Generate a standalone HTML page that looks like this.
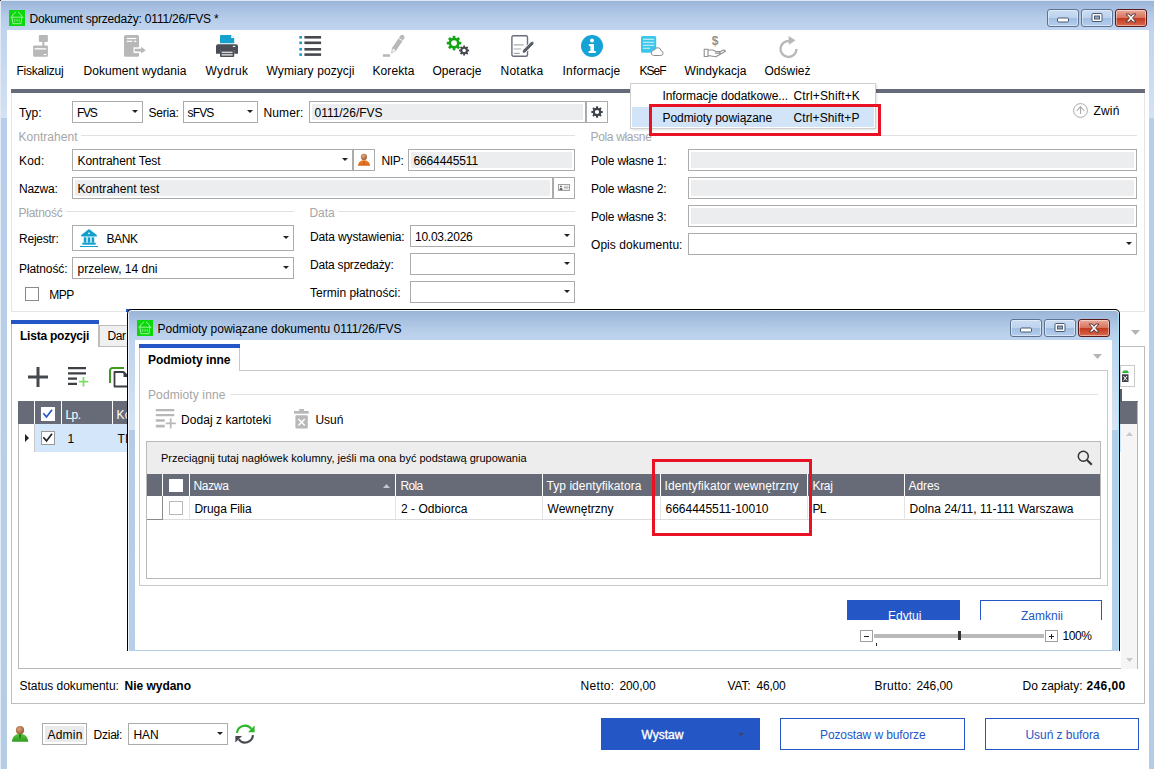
<!DOCTYPE html>
<html lang="pl"><head><meta charset="utf-8"><title>Dokument sprzedaży</title>
<style>
html,body{margin:0;padding:0;}
body{width:1154px;height:769px;overflow:hidden;position:relative;background:#fff;font-family:"Liberation Sans",sans-serif;font-size:12px;}
div,span.t,svg{position:absolute;box-sizing:border-box;}
span.t{white-space:nowrap;}
svg{overflow:visible;}
</style></head>
<body>
<div style="left:0px;top:0px;width:1154px;height:769px;background:linear-gradient(#c0d4ee 0px,#c0d4ee 30px,#d3e2f4 118px,#b6cee9 118px,#b8cfea 450px,#b5cce7 769px);"></div>
<div style="left:0px;top:0px;width:1154px;height:31px;background:linear-gradient(#98b3d6 0px,#a4bddf 6px,#b6cce9 18px,#c0d4ee 30px);"></div>
<div style="left:0px;top:0px;width:1154px;height:1px;background:#dfe8f4;"></div>
<div style="left:0px;top:0px;width:1px;height:769px;background:#e1eaf5;"></div>
<div style="left:0px;top:0px;width:1px;height:1px;background:#333;"></div>
<div style="left:7px;top:30px;width:1142px;height:739px;background:#fff;"></div>
<div style="left:9px;top:10px;width:16px;height:16px;background:#0bd80b;"></div>
<svg style="left:9px;top:10px" width="16" height="16" viewBox="0 0 16 16"><path d="M2.200 7.200h11.700 M3 7.300l1 6.400h8l.9-6.400 M2.600 7.100Q4.300 3.200 6.700 2.100 M13.400 7.100Q11.700 3.200 9.300 2.100" fill="none" stroke="#9af09a" stroke-width="1" stroke-linejoin="round" stroke-linecap="round"/><path d="M5.800 9.200v2.400 M8 9.200v2.400 M10.200 9.200v2.400" stroke="#9af09a" stroke-width=".900"/></svg>
<span id="t0" class="t" style="left:29.5px;top:11.0px;line-height:16px;font-size:12px;color:#000;letter-spacing:-0.202px;">Dokument sprzedaży: 0111/26/FVS *</span>
<div style="left:1047px;top:9px;width:32px;height:18px;background:linear-gradient(#c9dcf3 0%,#bdd3ee 48%,#a2bfe3 52%,#b4cdec 100%);border:1px solid #5d7391;border-radius:3px;box-shadow:inset 0 0 0 1px rgba(255,255,255,.45);"></div>
<svg style="left:1047px;top:9px" width="32" height="18" viewBox="0 0 32 18"><rect x="10.5" y="9.0" width="11" height="4" rx="1" fill="#fff" stroke="#4a5a70" stroke-width="1"/></svg>
<div style="left:1081px;top:9px;width:32px;height:18px;background:linear-gradient(#c9dcf3 0%,#bdd3ee 48%,#a2bfe3 52%,#b4cdec 100%);border:1px solid #5d7391;border-radius:3px;box-shadow:inset 0 0 0 1px rgba(255,255,255,.45);"></div>
<svg style="left:1081px;top:9px" width="32" height="18" viewBox="0 0 32 18"><rect x="11.0" y="4.5" width="10" height="8" rx="1" fill="#fff" stroke="#4a5a70" stroke-width="1"/><rect x="13.5" y="7.0" width="5" height="3" fill="#8fa9cc" stroke="#4a5a70" stroke-width="1"/></svg>
<div style="left:1115px;top:9px;width:32px;height:18px;background:linear-gradient(#e9a99b 0%,#d9735f 48%,#c4391f 52%,#d8694d 100%);border:1px solid #5a1a1a;border-radius:3px;box-shadow:inset 0 0 0 1px rgba(255,255,255,.45);"></div>
<svg style="left:1115px;top:9px" width="32" height="18" viewBox="0 0 32 18"><path d="M11.0 5.0h3.2l1.8 2.3 1.8-2.3h3.2l-3.4 4 3.4 4h-3.2l-1.8-2.3-1.8 2.3h-3.2l3.4-4z" fill="#fff" stroke="#5a3a3a" stroke-width="1" stroke-linejoin="round"/></svg>
<span id="t1" class="t" style="left:16.5px;top:63.0px;line-height:16px;font-size:12px;color:#000;letter-spacing:-0.236px;">Fiskalizuj</span>
<span id="t2" class="t" style="left:83.5px;top:63.0px;line-height:16px;font-size:12px;color:#000;letter-spacing:0.059px;">Dokument wydania</span>
<span id="t3" class="t" style="left:205.5px;top:63.0px;line-height:16px;font-size:12px;color:#000;letter-spacing:0.404px;">Wydruk</span>
<span id="t4" class="t" style="left:266.5px;top:63.0px;line-height:16px;font-size:12px;color:#000;letter-spacing:0.095px;">Wymiary pozycji</span>
<span id="t5" class="t" style="left:372.5px;top:63.0px;line-height:16px;font-size:12px;color:#000;letter-spacing:0.092px;">Korekta</span>
<span id="t6" class="t" style="left:432.5px;top:63.0px;line-height:16px;font-size:12px;color:#000;letter-spacing:0.037px;">Operacje</span>
<span id="t7" class="t" style="left:500.5px;top:63.0px;line-height:16px;font-size:12px;color:#000;letter-spacing:0.234px;">Notatka</span>
<span id="t8" class="t" style="left:562.5px;top:63.0px;line-height:16px;font-size:12px;color:#000;letter-spacing:0.197px;">Informacje</span>
<span id="t9" class="t" style="left:639.5px;top:63.0px;line-height:16px;font-size:12px;color:#000;letter-spacing:-1.004px;">KSeF</span>
<span id="t10" class="t" style="left:684.5px;top:63.0px;line-height:16px;font-size:12px;color:#000;letter-spacing:0.064px;">Windykacja</span>
<span id="t11" class="t" style="left:764.5px;top:63.0px;line-height:16px;font-size:12px;color:#000;letter-spacing:-0.002px;">Odśwież</span>
<svg style="left:30px;top:35px" width="20" height="24" viewBox="0 0 20 24"><rect x="8.800" y="0" width="9.100" height="7" rx="1" fill="#b8b8b8"/><rect x="12.400" y="6.500" width="2" height="4.500" fill="#b8b8b8"/><rect x="3.100" y="10.500" width="14.800" height="11.300" rx="1" fill="#b8b8b8"/><rect x="4.600" y="13.200" width="11.600" height="1.300" fill="#fff"/><rect x="13.700" y="19" width="2.700" height="1.100" fill="#fff"/></svg>
<svg style="left:124px;top:35px" width="24" height="24" viewBox="0 0 24 24"><rect x="0" y="0" width="15" height="21.800" rx="1.500" fill="#b8b8b8"/><rect x="2.800" y="2.900" width="9.500" height="1.200" fill="#fff"/><rect x="2.800" y="5.700" width="5.500" height="1.200" fill="#fff"/><rect x="10" y="5.700" width="2.300" height="1.200" fill="#fff"/><rect x="9.500" y="12.300" width="6" height="5.800" fill="#fff"/><path d="M10.700 13.800h6.500v-2l4.500 3.400-4.500 3.400v-2h-6.500z" fill="#b8b8b8"/></svg>
<svg style="left:216px;top:35px" width="23" height="23" viewBox="0 0 23 23"><path d="M5 0h10.200l3 3V8.200H4V1a1 1 0 0 1 1-1z" fill="#16a1cf"/><path d="M15.200 0v3h3z" fill="#fff"/><path d="M2 9.300h18a2 2 0 0 1 2 2v7.400h-3.800v-3.700H4v3.700H0v-7.400a2 2 0 0 1 2-2z" fill="#4a4d55"/><rect x="16.700" y="10.800" width="2.700" height="1.200" rx=".600" fill="#e8e8e8"/><rect x="4" y="15" width="14.200" height="7" rx="1" fill="#4a4d55"/><rect x="5.600" y="16.600" width="11" height="1.500" fill="#d6d6d6"/><rect x="5.600" y="19.100" width="11" height="1.500" fill="#d6d6d6"/></svg>
<svg style="left:299px;top:36px" width="24" height="21" viewBox="0 0 24 21"><g fill="#16a1cf"><rect x=".300" y="0" width="2.700" height="2.600"/><rect x=".300" y="5.5" width="2.700" height="2.600"/><rect x=".300" y="12" width="2.700" height="2.600"/><rect x=".300" y="17.3" width="2.700" height="2.600"/></g><g fill="#45484f"><rect x="5.400" y="0" width="16.700" height="2.600"/><rect x="5.400" y="5.5" width="16.700" height="2.600"/><rect x="5.400" y="12" width="16.700" height="2.600"/><rect x="5.400" y="17.3" width="16.700" height="2.600"/></g></svg>
<svg style="left:382px;top:35px" width="24" height="24" viewBox="0 0 24 24"><rect x=".900" y="19.200" width="7.100" height="2.600" fill="#b8b8b8"/><path d="M9.200 18.600 10 13.100 18.300 .700a2.400 2.400 0 0 1 4 2.600L14 15.800z" fill="#b8b8b8"/><path d="M10.300 17.200l.6-3.600 2.500 1.700z" fill="#fff"/><path d="M16.600 3.200l4 2.700" stroke="#fff" stroke-width=".900"/></svg>
<svg style="left:445px;top:35px" width="26" height="26" viewBox="0 0 26 26"><rect x="7.73" y="0.84" width="2.64" height="3.30" fill="#12a612" transform="rotate(0 9.05 8.1)"/><rect x="7.73" y="0.84" width="2.64" height="3.30" fill="#12a612" transform="rotate(45 9.05 8.1)"/><rect x="7.73" y="0.84" width="2.64" height="3.30" fill="#12a612" transform="rotate(90 9.05 8.1)"/><rect x="7.73" y="0.84" width="2.64" height="3.30" fill="#12a612" transform="rotate(135 9.05 8.1)"/><rect x="7.73" y="0.84" width="2.64" height="3.30" fill="#12a612" transform="rotate(180 9.05 8.1)"/><rect x="7.73" y="0.84" width="2.64" height="3.30" fill="#12a612" transform="rotate(225 9.05 8.1)"/><rect x="7.73" y="0.84" width="2.64" height="3.30" fill="#12a612" transform="rotate(270 9.05 8.1)"/><rect x="7.73" y="0.84" width="2.64" height="3.30" fill="#12a612" transform="rotate(315 9.05 8.1)"/><circle cx="9.05" cy="8.1" r="5.5" fill="#12a612"/><circle cx="9.05" cy="8.1" r="2.9" fill="#fff"/><rect x="18.19" y="10.48" width="1.82" height="2.28" fill="#45484f" transform="rotate(0 19.1 15.5)"/><rect x="18.19" y="10.48" width="1.82" height="2.28" fill="#45484f" transform="rotate(45 19.1 15.5)"/><rect x="18.19" y="10.48" width="1.82" height="2.28" fill="#45484f" transform="rotate(90 19.1 15.5)"/><rect x="18.19" y="10.48" width="1.82" height="2.28" fill="#45484f" transform="rotate(135 19.1 15.5)"/><rect x="18.19" y="10.48" width="1.82" height="2.28" fill="#45484f" transform="rotate(180 19.1 15.5)"/><rect x="18.19" y="10.48" width="1.82" height="2.28" fill="#45484f" transform="rotate(225 19.1 15.5)"/><rect x="18.19" y="10.48" width="1.82" height="2.28" fill="#45484f" transform="rotate(270 19.1 15.5)"/><rect x="18.19" y="10.48" width="1.82" height="2.28" fill="#45484f" transform="rotate(315 19.1 15.5)"/><circle cx="19.1" cy="15.5" r="3.8" fill="#45484f"/><circle cx="19.1" cy="15.5" r="1.8" fill="#fff"/></svg>
<svg style="left:511px;top:35px" width="24" height="24" viewBox="0 0 24 24"><rect x=".900" y=".800" width="15.600" height="20.400" rx="1.500" fill="#fff" stroke="#6a6e7a" stroke-width="1.400"/><path d="M2.800 9.800h9.900 M2.800 14h7.500 M2.800 18.400h6" stroke="#a9abb1" stroke-width="1.200"/><path d="M10.300 19.300l1.300-4.200 8.200-8.300a1.900 1.900 0 0 1 2.800 2.600l-8.200 8.400z" fill="#5d616b" stroke="#fff" stroke-width="1"/><path d="M10.300 19.300l.9-2.800 1.900 1.900z" fill="#fff"/></svg>
<svg style="left:581px;top:35px" width="22" height="22" viewBox="0 0 22 22"><circle cx="11" cy="11" r="11" fill="#14a3d4"/><circle cx="11" cy="5.600" r="2" fill="#fff"/><path d="M7.800 9h5.200v7h1.800v2H7.600v-2h1.800v-5H7.800z" fill="#fff"/></svg>
<svg style="left:641px;top:36px" width="24" height="22" viewBox="0 0 24 22"><path d="M0 1.500A1.500 1.500 0 0 1 1.500 0h12.200A1.500 1.500 0 0 1 15.200 1.500V16.700H1.500A1.500 1.500 0 0 1 0 15.200z" fill="#3cc6e8"/><path d="M2 3.300h11.200 M2 6.300h11.200 M2 9.300h11.200 M2 12.300h7" stroke="#d9f4fb" stroke-width="1.100"/><path d="M12.500 19.500h7.200a2.400 2.400 0 0 0 .4-4.750 3.400 3.400 0 0 0-6.600-.75A2.800 2.800 0 0 0 12.500 19.500z" fill="#fff" stroke="#8a8d92" stroke-width="1"/></svg>
<svg style="left:703px;top:35px" width="24" height="24" viewBox="0 0 24 24"><text x="12.200" y="10.300" font-size="12" font-weight="700" font-family='"Liberation Sans",sans-serif' text-anchor="middle" fill="#8f8f8f">$</text><path d="M1.200 14.200h3.800v7.300H1.200z M5 15h4.800l3.200 1.500h4.200v1.600H12 M5 20.500l7.800 1.300 9.700-5.600c-.8-1.200-2-1.200-3-.7l-3.300 1.800" fill="none" stroke="#8f8f8f" stroke-width="1.100" stroke-linejoin="round"/></svg>
<svg style="left:777px;top:35px" width="22" height="24" viewBox="0 0 22 24"><path d="M13.500 6.200A8 8 0 1 0 19.500 14" fill="none" stroke="#b8b8b8" stroke-width="2.400"/><path d="M11.500 1l7 4.200-6.500 4.600z" fill="#b8b8b8"/></svg>
<div style="left:11px;top:89px;width:1134px;height:4px;background:#676b77;"></div>
<div style="left:11px;top:93px;width:1134px;height:219px;border:1px solid #e5e5e5;border-top:none;background:#fff;"></div>
<div style="left:11px;top:324px;width:1px;height:22px;background:#bdbdbd;"></div>
<div style="left:11px;top:346px;width:1134px;height:358px;border:1px solid #bdbdbd;background:#fff;"></div>
<span id="t12" class="t" style="left:19.0px;top:105.0px;line-height:16px;font-size:12px;color:#000;letter-spacing:-0.047px;">Typ:</span>
<div style="left:72px;top:101px;width:71px;height:22px;border:1px solid #ababab;background:#fff;"></div>
<svg style="left:132px;top:110.0px" width="6" height="3" viewBox="0 0 6 3"><path d="M0 0h6L3 3z" fill="#222"/></svg>
<span id="t13" class="t" style="left:77.0px;top:105.0px;line-height:16px;font-size:12px;color:#000;letter-spacing:-1.281px;">FVS</span>
<span id="t14" class="t" style="left:148.5px;top:105.0px;line-height:16px;font-size:12px;color:#000;letter-spacing:-0.227px;">Seria:</span>
<div style="left:183px;top:101px;width:75px;height:22px;border:1px solid #ababab;background:#fff;"></div>
<svg style="left:247px;top:110.0px" width="6" height="3" viewBox="0 0 6 3"><path d="M0 0h6L3 3z" fill="#222"/></svg>
<span id="t15" class="t" style="left:187.5px;top:105.0px;line-height:16px;font-size:12px;color:#000;letter-spacing:-0.836px;">sFVS</span>
<span id="t16" class="t" style="left:263.5px;top:105.0px;line-height:16px;font-size:12px;color:#000;letter-spacing:0.109px;">Numer:</span>
<div style="left:309px;top:101px;width:277px;height:22px;border:1px solid #ababab;background:#fff;"></div>
<div style="left:312px;top:104px;width:271px;height:16px;background:#ecedee;"></div>
<span id="t17" class="t" style="left:314.5px;top:105.0px;line-height:16px;font-size:12px;color:#000;letter-spacing:-0.025px;">0111/26/FVS</span>
<div style="left:586px;top:101px;width:22px;height:22px;border:1px solid #ababab;background:#fff;"></div>
<svg style="left:591px;top:106px" width="12" height="12" viewBox="0 0 12 12"><rect x="4.97" y="0.32" width="2.06" height="2.58" fill="#3f434a" transform="rotate(0 6 6)"/><rect x="4.97" y="0.32" width="2.06" height="2.58" fill="#3f434a" transform="rotate(45 6 6)"/><rect x="4.97" y="0.32" width="2.06" height="2.58" fill="#3f434a" transform="rotate(90 6 6)"/><rect x="4.97" y="0.32" width="2.06" height="2.58" fill="#3f434a" transform="rotate(135 6 6)"/><rect x="4.97" y="0.32" width="2.06" height="2.58" fill="#3f434a" transform="rotate(180 6 6)"/><rect x="4.97" y="0.32" width="2.06" height="2.58" fill="#3f434a" transform="rotate(225 6 6)"/><rect x="4.97" y="0.32" width="2.06" height="2.58" fill="#3f434a" transform="rotate(270 6 6)"/><rect x="4.97" y="0.32" width="2.06" height="2.58" fill="#3f434a" transform="rotate(315 6 6)"/><circle cx="6" cy="6" r="4.3" fill="#3f434a"/><circle cx="6" cy="6" r="2.1" fill="#fff"/></svg>
<svg style="left:1073px;top:102.5px" width="15" height="15" viewBox="0 0 15 15"><circle cx="7.500" cy="7.500" r="6.900" fill="none" stroke="#ababab" stroke-width="1"/><path d="M7.500 11V3.800 M3.700 8 7.500 3.700l3.800 4.300" fill="none" stroke="#ababab" stroke-width="1.100"/></svg>
<span id="t18" class="t" style="left:1093.5px;top:103.0px;line-height:16px;font-size:12px;color:#000;letter-spacing:0.164px;">Zwiń</span>
<span id="t19" class="t" style="left:18.5px;top:129.0px;line-height:16px;font-size:12px;color:#a6a6a6;letter-spacing:0.028px;">Kontrahent</span>
<div style="left:81px;top:135px;width:494px;height:1px;background:#e1e1e1;"></div>
<span id="t20" class="t" style="left:590.5px;top:129.0px;line-height:16px;font-size:12px;color:#a6a6a6;letter-spacing:-0.338px;">Pola własne</span>
<div style="left:655px;top:135px;width:482px;height:1px;background:#e1e1e1;"></div>
<span id="t21" class="t" style="left:19.0px;top:153.0px;line-height:16px;font-size:12px;color:#000;letter-spacing:0.203px;">Kod:</span>
<div style="left:72px;top:149px;width:281px;height:22px;border:1px solid #ababab;background:#fff;"></div>
<svg style="left:342px;top:158.0px" width="6" height="3" viewBox="0 0 6 3"><path d="M0 0h6L3 3z" fill="#222"/></svg>
<span id="t22" class="t" style="left:77.5px;top:153.0px;line-height:16px;font-size:12px;color:#000;letter-spacing:-0.056px;">Kontrahent Test</span>
<div style="left:353px;top:149px;width:22px;height:22px;border:1px solid #ababab;background:#fff;"></div>
<svg style="left:358px;top:153px" width="13" height="13" viewBox="0 0 13 13"><defs><radialGradient id="hd2" cx=".4" cy=".35" r=".7"><stop offset="0" stop-color="#dcae8c"/><stop offset="1" stop-color="#a5562a"/></radialGradient><linearGradient id="bd2" x1="0" y1="0" x2="0" y2="1"><stop offset="0" stop-color="#ef8a2a"/><stop offset="1" stop-color="#d6641a"/></linearGradient></defs><path d="M0 12.800c.2-3.800 2.500-5.600 6-5.600s5.800 1.800 6 5.600z" fill="url(#bd2)"/><path d="M6 7.400l-.9 1 .9 3.200.9-3.200z" fill="#b9541a"/><circle cx="5.900" cy="3.900" r="3.100" fill="url(#hd2)"/></svg>
<span id="t23" class="t" style="left:381.5px;top:153.0px;line-height:16px;font-size:12px;color:#000;letter-spacing:-0.336px;">NIP:</span>
<div style="left:408px;top:149px;width:167px;height:22px;border:1px solid #ababab;background:#fff;"></div>
<div style="left:411px;top:152px;width:161px;height:16px;background:#ecedee;"></div>
<span id="t24" class="t" style="left:413.5px;top:153.0px;line-height:16px;font-size:12px;color:#000;letter-spacing:-0.136px;">6664445511</span>
<span id="t25" class="t" style="left:19.0px;top:181.0px;line-height:16px;font-size:12px;color:#000;letter-spacing:-0.253px;">Nazwa:</span>
<div style="left:72px;top:177px;width:481px;height:22px;border:1px solid #ababab;background:#fff;"></div>
<div style="left:75px;top:180px;width:475px;height:16px;background:#ecedee;"></div>
<span id="t26" class="t" style="left:77.5px;top:181.0px;line-height:16px;font-size:12px;color:#000;letter-spacing:0.040px;">Kontrahent test</span>
<div style="left:553px;top:177px;width:22px;height:22px;border:1px solid #ababab;background:#fff;"></div>
<svg style="left:558px;top:184px" width="12" height="7" viewBox="0 0 12 7"><rect x=".500" y=".500" width="11" height="6" fill="#fff" stroke="#a0a0a0" stroke-width="1"/><circle cx="3" cy="2.400" r=".900" fill="#555"/><path d="M1.300 6c.2-1.600.9-2.300 1.700-2.300s1.500.7 1.700 2.300z" fill="#666"/><rect x="5.800" y="1.500" width="4.700" height="4" fill="#d4d4d4"/><path d="M5.800 3.500h4.700" stroke="#a8a8a8" stroke-width=".700"/></svg>
<span id="t27" class="t" style="left:18.5px;top:205.0px;line-height:16px;font-size:12px;color:#a6a6a6;letter-spacing:-0.254px;">Płatność</span>
<div style="left:66px;top:211px;width:228px;height:1px;background:#e1e1e1;"></div>
<span id="t28" class="t" style="left:309.5px;top:205.0px;line-height:16px;font-size:12px;color:#a6a6a6;letter-spacing:-0.090px;">Data</span>
<div style="left:338px;top:211px;width:237px;height:1px;background:#e1e1e1;"></div>
<span id="t29" class="t" style="left:19.0px;top:231.0px;line-height:16px;font-size:12px;color:#000;letter-spacing:-0.232px;">Rejestr:</span>
<div style="left:72px;top:225px;width:222px;height:26px;border:1px solid #ababab;background:#fff;"></div>
<svg style="left:283px;top:236.0px" width="6" height="3" viewBox="0 0 6 3"><path d="M0 0h6L3 3z" fill="#222"/></svg>
<svg style="left:80px;top:229px" width="18" height="18" viewBox="0 0 18 18"><path d="M9 .100 16.800 6V7.400H1.200V6z" fill="#11a0cc"/><circle cx="9" cy="4.300" r=".900" fill="#fff"/><rect x="3.800" y="8.300" width="2.600" height="5.400" fill="#11a0cc"/><rect x="7.700" y="8.300" width="2.600" height="5.400" fill="#11a0cc"/><rect x="11.600" y="8.300" width="2.600" height="5.400" fill="#11a0cc"/><rect x="2.300" y="13.700" width="13.400" height="2" fill="#11a0cc"/><rect x="0" y="17" width="18" height="1" fill="#11a0cc"/></svg>
<span id="t30" class="t" style="left:106.5px;top:231.0px;line-height:16px;font-size:12px;color:#000;letter-spacing:-0.422px;">BANK</span>
<span id="t31" class="t" style="left:19.0px;top:261.0px;line-height:16px;font-size:12px;color:#000;letter-spacing:-0.097px;">Płatność:</span>
<div style="left:72px;top:257px;width:222px;height:22px;border:1px solid #ababab;background:#fff;"></div>
<svg style="left:283px;top:266.0px" width="6" height="3" viewBox="0 0 6 3"><path d="M0 0h6L3 3z" fill="#222"/></svg>
<span id="t32" class="t" style="left:77.5px;top:261.0px;line-height:16px;font-size:12px;color:#000;letter-spacing:-0.004px;">przelew, 14 dni</span>
<div style="left:25px;top:287px;width:14px;height:14px;border:1px solid #8a8a8a;background:#fff;"></div>
<span id="t33" class="t" style="left:49.2px;top:287.0px;line-height:16px;font-size:12px;color:#000;letter-spacing:-0.470px;">MPP</span>
<span id="t34" class="t" style="left:310.0px;top:229.0px;line-height:16px;font-size:12px;color:#000;letter-spacing:-0.130px;">Data wystawienia:</span>
<div style="left:410px;top:225px;width:165px;height:22px;border:1px solid #ababab;background:#fff;"></div>
<svg style="left:564px;top:234.0px" width="6" height="3" viewBox="0 0 6 3"><path d="M0 0h6L3 3z" fill="#222"/></svg>
<span id="t35" class="t" style="left:415.0px;top:229.0px;line-height:16px;font-size:12px;color:#000;letter-spacing:-0.256px;">10.03.2026</span>
<span id="t36" class="t" style="left:310.0px;top:257.0px;line-height:16px;font-size:12px;color:#000;letter-spacing:-0.214px;">Data sprzedaży:</span>
<div style="left:410px;top:253px;width:165px;height:22px;border:1px solid #ababab;background:#fff;"></div>
<svg style="left:564px;top:262.0px" width="6" height="3" viewBox="0 0 6 3"><path d="M0 0h6L3 3z" fill="#222"/></svg>
<span id="t37" class="t" style="left:310.0px;top:285.0px;line-height:16px;font-size:12px;color:#000;letter-spacing:0.027px;">Termin płatności:</span>
<div style="left:410px;top:281px;width:165px;height:22px;border:1px solid #ababab;background:#fff;"></div>
<svg style="left:564px;top:290.0px" width="6" height="3" viewBox="0 0 6 3"><path d="M0 0h6L3 3z" fill="#222"/></svg>
<span id="t38" class="t" style="left:591.0px;top:153.0px;line-height:16px;font-size:12px;color:#000;letter-spacing:-0.182px;">Pole własne 1:</span>
<div style="left:688px;top:149px;width:449px;height:22px;border:1px solid #ababab;background:#fff;"></div>
<div style="left:691px;top:152px;width:443px;height:16px;background:#ecedee;"></div>
<span id="t39" class="t" style="left:591.0px;top:181.0px;line-height:16px;font-size:12px;color:#000;letter-spacing:-0.182px;">Pole własne 2:</span>
<div style="left:688px;top:177px;width:449px;height:22px;border:1px solid #ababab;background:#fff;"></div>
<div style="left:691px;top:180px;width:443px;height:16px;background:#ecedee;"></div>
<span id="t40" class="t" style="left:591.0px;top:209.0px;line-height:16px;font-size:12px;color:#000;letter-spacing:-0.182px;">Pole własne 3:</span>
<div style="left:688px;top:205px;width:449px;height:22px;border:1px solid #ababab;background:#fff;"></div>
<div style="left:691px;top:208px;width:443px;height:16px;background:#ecedee;"></div>
<span id="t41" class="t" style="left:591.0px;top:237.0px;line-height:16px;font-size:12px;color:#000;letter-spacing:0.052px;">Opis dokumentu:</span>
<div style="left:688px;top:233px;width:449px;height:22px;border:1px solid #ababab;background:#fff;"></div>
<svg style="left:1126px;top:242.0px" width="6" height="3" viewBox="0 0 6 3"><path d="M0 0h6L3 3z" fill="#222"/></svg>
<div style="left:630px;top:83px;width:246px;height:46px;background:#fff;border:1px solid #cfcfcf;box-shadow:1px 1px 2px rgba(0,0,0,.12);"></div>
<div style="left:632px;top:107px;width:242px;height:20px;background:#d2e4f8;"></div>
<span id="t42" class="t" style="left:662.5px;top:88.0px;line-height:16px;font-size:12px;color:#000;letter-spacing:-0.083px;">Informacje dodatkowe...</span>
<span id="t43" class="t" style="left:793.5px;top:88.0px;line-height:16px;font-size:12px;color:#000;letter-spacing:0.150px;">Ctrl+Shift+K</span>
<span id="t44" class="t" style="left:662.5px;top:110.0px;line-height:16px;font-size:12px;color:#000;letter-spacing:-0.069px;">Podmioty powiązane</span>
<span id="t45" class="t" style="left:793.5px;top:110.0px;line-height:16px;font-size:12px;color:#000;letter-spacing:0.108px;">Ctrl+Shift+P</span>
<div style="left:649px;top:104px;width:232px;height:32px;border:3px solid #e81224;"></div>
<div style="left:99px;top:325px;width:41px;height:22px;background:#f0f0f0;border:1px solid #bdbdbd;"></div>
<span id="t46" class="t" style="left:107.5px;top:328.0px;line-height:16px;font-size:12px;color:#000;letter-spacing:-0.448px;">Dar</span>
<div style="left:12px;top:320px;width:87px;height:27px;background:#fff;border-right:1px solid #bdbdbd;"></div>
<div style="left:11px;top:320px;width:88px;height:4px;background:#2457c5;"></div>
<span id="t47" class="t" style="left:20.0px;top:328.0px;line-height:16px;font-size:12px;color:#000;font-weight:700;letter-spacing:-0.233px;">Lista pozycji</span>
<svg style="left:1131px;top:330px" width="9" height="5" viewBox="0 0 9 5"><path d="M0 0h9L4.500 5z" fill="#b4b4b4"/></svg>
<div style="left:18px;top:402px;width:1120px;height:267px;border:1px solid #b8b8b8;border-top:none;background:#fff;"></div>
<svg style="left:28px;top:367px" width="20" height="20" viewBox="0 0 20 20"><path d="M10 0v20 M0 10h20" stroke="#45484f" stroke-width="3"/></svg>
<svg style="left:68px;top:367px" width="21" height="20" viewBox="0 0 21 20"><path d="M0 1.200h18 M0 6.400h18 M0 11.600h9 M0 16.800h9" stroke="#3b3f46" stroke-width="2.200"/><path d="M15.500 10v9.500 M11 14.700h9.300" stroke="#7ddc6a" stroke-width="1.800"/></svg>
<svg style="left:109px;top:367px" width="20" height="20" viewBox="0 0 20 20"><path d="M1 16V3.500A2.500 2.500 0 0 1 3.500 1H15" fill="none" stroke="#3e9b1f" stroke-width="2"/><path d="M5.500 5h9l5 5v9.500h-14z" fill="#fff" stroke="#3b3f46" stroke-width="1.800" stroke-linejoin="round"/><path d="M14.500 5v5h5z" fill="#3b3f46"/></svg>
<div style="left:1120px;top:365px;width:15px;height:22px;border:1px solid #c9c9c9;background:#fff;"></div>
<svg style="left:1122px;top:370px" width="8" height="12" viewBox="0 0 8 12"><path d="M0 3 1.500 .500h4L7 3z" fill="#2db52d"/><rect x="0" y="4.300" width="6.500" height="7.700" fill="#3b3f46"/><path d="M1.500 6l3.500 4.500 M5 6 1.500 10.500" stroke="#fff" stroke-width="1"/></svg>
<div style="left:18px;top:401px;width:1120px;height:23px;background:#676b77;"></div>
<div style="left:34px;top:401px;width:1px;height:23px;background:#fff;"></div>
<div style="left:61px;top:401px;width:1px;height:23px;background:#fff;"></div>
<div style="left:112px;top:401px;width:1px;height:23px;background:#fff;"></div>
<div style="left:41px;top:407px;width:14px;height:14px;background:#fff;border:1px solid #fff;"></div>
<svg style="left:41px;top:407px" width="14" height="14" viewBox="0 0 14 14"><path d="M2.300 6.200l3.200 3.700 5.500-7.200" fill="none" stroke="#2457c5" stroke-width="1.700"/></svg>
<span id="t48" class="t" style="left:65.5px;top:407.0px;line-height:16px;font-size:12px;color:#fff;letter-spacing:-0.562px;">Lp.</span>
<span id="t49" class="t" style="left:116.5px;top:407.0px;line-height:16px;font-size:12px;color:#fff;letter-spacing:0.156px;">Ko</span>
<div style="left:35px;top:424px;width:1103px;height:28px;background:#d4e6f9;"></div>
<div style="left:34px;top:424px;width:1px;height:28px;background:#c9c9c9;"></div>
<svg style="left:25px;top:434px" width="4" height="8" viewBox="0 0 4 8"><path d="M0 0l4 4-4 4z" fill="#222"/></svg>
<div style="left:41px;top:431px;width:14px;height:14px;background:#fff;border:1px solid #9a9a9a;"></div>
<svg style="left:41px;top:431px" width="14" height="14" viewBox="0 0 14 14"><path d="M2.300 6.200l3.200 3.700 5.500-7.200" fill="none" stroke="#222" stroke-width="1.700"/></svg>
<span id="t50" class="t" style="left:67.5px;top:431.0px;line-height:16px;font-size:12px;color:#000;letter-spacing:-0.688px;">1</span>
<span id="t51" class="t" style="left:117.5px;top:431.0px;line-height:16px;font-size:12px;color:#000;letter-spacing:0.164px;">TI</span>
<div style="left:1120px;top:389px;width:2px;height:13px;background:#555b68;"></div>
<div style="left:1121px;top:424px;width:16px;height:245px;background:#f5f5f5;"></div>
<svg style="left:1126px;top:432px" width="7" height="4" viewBox="0 0 7 4"><path d="M0 4h7L3.500 0z" fill="#c8c8c8"/></svg>
<svg style="left:1126px;top:658px" width="7" height="4" viewBox="0 0 7 4"><path d="M0 0h7L3.500 4z" fill="#c8c8c8"/></svg>
<div style="left:1137px;top:402px;width:1px;height:267px;background:#b8b8b8;"></div>
<span id="t52" class="t" style="left:19.5px;top:678.0px;line-height:16px;font-size:12px;color:#000;letter-spacing:-0.045px;">Status dokumentu:</span>
<span id="t53" class="t" style="left:124.5px;top:678.0px;line-height:16px;font-size:12px;color:#000;font-weight:700;letter-spacing:-0.019px;">Nie wydano</span>
<span id="t54" class="t" style="left:580.5px;top:678.0px;line-height:16px;font-size:12px;color:#000;letter-spacing:0.328px;">Netto:</span>
<span id="t55" class="t" style="left:619.5px;top:678.0px;line-height:16px;font-size:12px;color:#000;letter-spacing:-0.120px;">200,00</span>
<span id="t56" class="t" style="left:727.5px;top:678.0px;line-height:16px;font-size:12px;color:#000;letter-spacing:-0.141px;">VAT:</span>
<span id="t57" class="t" style="left:756.5px;top:678.0px;line-height:16px;font-size:12px;color:#000;letter-spacing:-0.206px;">46,00</span>
<span id="t58" class="t" style="left:874.5px;top:678.0px;line-height:16px;font-size:12px;color:#000;letter-spacing:0.234px;">Brutto:</span>
<span id="t59" class="t" style="left:916.5px;top:678.0px;line-height:16px;font-size:12px;color:#000;letter-spacing:-0.120px;">246,00</span>
<span id="t60" class="t" style="left:1022.5px;top:678.0px;line-height:16px;font-size:12px;color:#000;letter-spacing:-0.003px;">Do zapłaty:</span>
<span id="t61" class="t" style="left:1086.5px;top:678.0px;line-height:16px;font-size:12px;color:#000;font-weight:700;letter-spacing:0.380px;">246,00</span>
<svg style="left:12px;top:726px" width="17" height="16" viewBox="0 0 17 16"><defs><radialGradient id="hd" cx=".4" cy=".35" r=".7"><stop offset="0" stop-color="#d9a27e"/><stop offset="1" stop-color="#96552f"/></radialGradient><linearGradient id="bd" x1="0" y1="0" x2="0" y2="1"><stop offset="0" stop-color="#5cc83c"/><stop offset="1" stop-color="#2f9a22"/></linearGradient></defs><path d="M0 15.800c.2-5 3.300-8.100 8.100-8.100s7.900 3.100 8.100 8.100z" fill="url(#bd)"/><path d="M8.100 8l-1.100 1.300 1.100 4.200 1.100-4.200z" fill="#1f6e18"/><circle cx="8" cy="4.200" r="4.100" fill="url(#hd)"/></svg>
<div style="left:42px;top:723px;width:45px;height:22px;border:1px solid #ababab;background:#fff;"></div>
<div style="left:45px;top:726px;width:39px;height:16px;background:#eaeaea;"></div>
<span id="t62" class="t" style="left:47.5px;top:727.0px;line-height:16px;font-size:12px;color:#000;letter-spacing:0.197px;">Admin</span>
<span id="t63" class="t" style="left:93.5px;top:727.0px;line-height:16px;font-size:12px;color:#000;letter-spacing:-0.235px;">Dział:</span>
<div style="left:128px;top:723px;width:100px;height:22px;border:1px solid #ababab;background:#fff;"></div>
<svg style="left:217px;top:732.0px" width="6" height="3" viewBox="0 0 6 3"><path d="M0 0h6L3 3z" fill="#222"/></svg>
<span id="t64" class="t" style="left:133.5px;top:727.0px;line-height:16px;font-size:12px;color:#000;letter-spacing:-0.115px;">HAN</span>
<svg style="left:234px;top:723px" width="22" height="22" viewBox="0 0 22 22"><path d="M3 10A8 8 0 0 1 17.300 5.800" fill="none" stroke="#2db52d" stroke-width="2.100"/><path d="M20.600 2.600v6.600h-6.600z" fill="#2db52d"/><path d="M19 12.200A8 8 0 0 1 4.700 16.400" fill="none" stroke="#45484f" stroke-width="2.100"/><path d="M1.400 19.600v-6.600h6.600z" fill="#45484f"/></svg>
<div style="left:601px;top:718px;width:159px;height:32px;background:#2457c5;"></div>
<span id="t65" class="t" style="left:641.5px;top:727.0px;line-height:16px;font-size:12px;color:#fff;letter-spacing:0.016px;-webkit-text-stroke:.35px #fff;">Wystaw</span>
<svg style="left:738px;top:733px" width="6" height="3" viewBox="0 0 6 3"><path d="M0 0h6L3 3z" fill="#3b4560"/></svg>
<div style="left:780px;top:718px;width:185px;height:32px;border:1px solid #2457c5;background:#fff;"></div>
<span id="t66" class="t" style="left:820.0px;top:727.0px;line-height:16px;font-size:12px;color:#2457c5;letter-spacing:-0.105px;">Pozostaw w buforze</span>
<div style="left:985px;top:718px;width:154px;height:32px;border:1px solid #2457c5;background:#fff;"></div>
<span id="t67" class="t" style="left:1025.5px;top:727.0px;line-height:16px;font-size:12px;color:#2457c5;letter-spacing:-0.055px;">Usuń z bufora</span>
<div style="left:126px;top:309px;width:5px;height:3px;background:#2457c5;"></div>
<div style="left:127px;top:309px;width:993px;height:342px;background:#000;border-radius:5px 5px 0 0;"></div>
<div style="left:128px;top:310px;width:991px;height:341px;background:#eef4fb;border-radius:4px 4px 0 0;"></div>
<div style="left:1118px;top:314px;width:1px;height:337px;background:#a5e3f7;"></div>
<div style="left:129px;top:311px;width:989px;height:340px;background:linear-gradient(#bfd4ee 0px,#bfd4ee 30px,#d6e4f5 119px,#b3cce8 119px,#b6cfea 340px);border-radius:3px 3px 0 0;"></div>
<div style="left:129px;top:311px;width:989px;height:30px;background:linear-gradient(#9ab5d7 0px,#a5bfdf 8px,#b7ceea 20px,#bfd4ee 30px);border-radius:3px 3px 0 0;"></div>
<div style="left:128px;top:650px;width:991px;height:1px;background:#fff;"></div>
<div style="left:129px;top:650px;width:989px;height:1px;background:#b5cfe9;"></div>
<div style="left:135px;top:340px;width:977px;height:310px;background:#fff;"></div>
<div style="left:137px;top:320px;width:16px;height:16px;background:#0bd80b;"></div>
<svg style="left:137px;top:320px" width="16" height="16" viewBox="0 0 16 16"><path d="M2.200 7.200h11.700 M3 7.300l1 6.400h8l.9-6.400 M2.600 7.100Q4.300 3.200 6.700 2.100 M13.400 7.100Q11.700 3.200 9.300 2.100" fill="none" stroke="#9af09a" stroke-width="1" stroke-linejoin="round" stroke-linecap="round"/><path d="M5.800 9.200v2.400 M8 9.200v2.400 M10.200 9.200v2.400" stroke="#9af09a" stroke-width=".900"/></svg>
<span id="t68" class="t" style="left:157.5px;top:321.0px;line-height:16px;font-size:12px;color:#000;letter-spacing:-0.026px;">Podmioty powiązane dokumentu 0111/26/FVS</span>
<div style="left:1010px;top:319px;width:32px;height:18px;background:linear-gradient(#c9dcf3 0%,#bdd3ee 48%,#a2bfe3 52%,#b4cdec 100%);border:1px solid #5d7391;border-radius:3px;box-shadow:inset 0 0 0 1px rgba(255,255,255,.45);"></div>
<svg style="left:1010px;top:319px" width="32" height="18" viewBox="0 0 32 18"><rect x="10.5" y="9.0" width="11" height="4" rx="1" fill="#fff" stroke="#4a5a70" stroke-width="1"/></svg>
<div style="left:1044px;top:319px;width:32px;height:18px;background:linear-gradient(#c9dcf3 0%,#bdd3ee 48%,#a2bfe3 52%,#b4cdec 100%);border:1px solid #5d7391;border-radius:3px;box-shadow:inset 0 0 0 1px rgba(255,255,255,.45);"></div>
<svg style="left:1044px;top:319px" width="32" height="18" viewBox="0 0 32 18"><rect x="11.0" y="4.5" width="10" height="8" rx="1" fill="#fff" stroke="#4a5a70" stroke-width="1"/><rect x="13.5" y="7.0" width="5" height="3" fill="#8fa9cc" stroke="#4a5a70" stroke-width="1"/></svg>
<div style="left:1078px;top:319px;width:32px;height:18px;background:linear-gradient(#e9a99b 0%,#d9735f 48%,#c4391f 52%,#d8694d 100%);border:1px solid #5a1a1a;border-radius:3px;box-shadow:inset 0 0 0 1px rgba(255,255,255,.45);"></div>
<svg style="left:1078px;top:319px" width="32" height="18" viewBox="0 0 32 18"><path d="M11.0 5.0h3.2l1.8 2.3 1.8-2.3h3.2l-3.4 4 3.4 4h-3.2l-1.8-2.3-1.8 2.3h-3.2l3.4-4z" fill="#fff" stroke="#5a3a3a" stroke-width="1" stroke-linejoin="round"/></svg>
<div style="left:139px;top:370px;width:969px;height:216px;border:1px solid #c9c9c9;background:#fff;"></div>
<div style="left:139px;top:344px;width:101px;height:27px;background:#fff;border-left:1px solid #c9c9c9;border-right:1px solid #c9c9c9;"></div>
<div style="left:139px;top:344px;width:101px;height:4px;background:#2457c5;"></div>
<span id="t69" class="t" style="left:148.0px;top:352.0px;line-height:16px;font-size:12px;color:#000;font-weight:700;letter-spacing:-0.014px;">Podmioty inne</span>
<svg style="left:1093px;top:354px" width="9" height="5" viewBox="0 0 9 5"><path d="M0 0h9L4.500 5z" fill="#b4b4b4"/></svg>
<span id="t70" class="t" style="left:148.0px;top:387.0px;line-height:16px;font-size:12px;color:#a6a6a6;letter-spacing:0.112px;">Podmioty inne</span>
<div style="left:230px;top:394px;width:868px;height:1px;background:#e1e1e1;"></div>
<svg style="left:155px;top:409px" width="21" height="20" viewBox="0 0 21 20"><path d="M.800 1.100h18.500 M.800 6.200h18.500" stroke="#b8b8b8" stroke-width="2.200"/><path d="M.800 11.500h9 M.800 17.200h9" stroke="#b8b8b8" stroke-width="2.700"/><path d="M15.700 9.200v10.400 M10.700 14.300h10.100" stroke="#b8b8b8" stroke-width="1.700"/></svg>
<span id="t71" class="t" style="left:181.0px;top:412.0px;line-height:16px;font-size:12px;color:#000;letter-spacing:0.048px;">Dodaj z kartoteki</span>
<svg style="left:294px;top:409px" width="15" height="20" viewBox="0 0 15 20"><rect x="5.200" y="0" width="4.800" height="2.500" fill="#b8b8b8"/><rect x="0" y="2" width="14.700" height="2.700" fill="#b8b8b8"/><rect x="1.400" y="6.300" width="12.400" height="13.300" rx="1" fill="#b8b8b8"/><path d="M4.400 10l6.400 6.600 M10.800 10l-6.400 6.600" stroke="#fff" stroke-width="1.500"/></svg>
<span id="t72" class="t" style="left:315.5px;top:412.0px;line-height:16px;font-size:12px;color:#000;letter-spacing:-0.055px;">Usuń</span>
<div style="left:146px;top:441px;width:955px;height:138px;border:1px solid #b9b9b9;background:#fff;"></div>
<div style="left:147px;top:442px;width:953px;height:32px;background:#ededee;"></div>
<span id="t73" class="t" style="left:161.0px;top:450.0px;line-height:16px;font-size:11px;color:#000;letter-spacing:0.001px;">Przeciągnij tutaj nagłówek kolumny, jeśli ma ona być podstawą grupowania</span>
<svg style="left:1077px;top:450px" width="16" height="16" viewBox="0 0 16 16"><circle cx="6.300" cy="6.300" r="5" fill="none" stroke="#333" stroke-width="1.500"/><path d="M10 10l4.800 4.800" stroke="#333" stroke-width="2"/></svg>
<div style="left:147px;top:474px;width:953px;height:22px;background:#676b77;"></div>
<div style="left:162px;top:474px;width:1px;height:22px;background:#fff;"></div>
<div style="left:162px;top:496px;width:1px;height:24px;background:#e3e3e3;"></div>
<div style="left:189px;top:474px;width:1px;height:22px;background:#fff;"></div>
<div style="left:189px;top:496px;width:1px;height:24px;background:#e3e3e3;"></div>
<div style="left:395px;top:474px;width:1px;height:22px;background:#fff;"></div>
<div style="left:395px;top:496px;width:1px;height:24px;background:#e3e3e3;"></div>
<div style="left:542px;top:474px;width:1px;height:22px;background:#fff;"></div>
<div style="left:542px;top:496px;width:1px;height:24px;background:#e3e3e3;"></div>
<div style="left:660px;top:474px;width:1px;height:22px;background:#fff;"></div>
<div style="left:660px;top:496px;width:1px;height:24px;background:#e3e3e3;"></div>
<div style="left:807px;top:474px;width:1px;height:22px;background:#fff;"></div>
<div style="left:807px;top:496px;width:1px;height:24px;background:#e3e3e3;"></div>
<div style="left:904px;top:474px;width:1px;height:22px;background:#fff;"></div>
<div style="left:904px;top:496px;width:1px;height:24px;background:#e3e3e3;"></div>
<div style="left:147px;top:519px;width:953px;height:1px;background:#dcdcdc;"></div>
<div style="left:147px;top:519px;width:16px;height:1px;background:#8a8a8a;"></div>
<div style="left:162px;top:496px;width:1px;height:24px;background:#8a8a8a;"></div>
<div style="left:169px;top:479px;width:14px;height:13px;background:#fff;"></div>
<div style="left:169px;top:501px;width:14px;height:14px;background:#fff;border:1px solid #b8b8b8;"></div>
<svg style="left:383px;top:484px" width="7" height="4" viewBox="0 0 7 4"><path d="M0 4h7L3.500 0z" fill="#c4c6cc"/></svg>
<span id="t74" class="t" style="left:193.5px;top:478.0px;line-height:16px;font-size:12px;color:#fff;letter-spacing:-0.338px;">Nazwa</span>
<span id="t75" class="t" style="left:400.5px;top:478.0px;line-height:16px;font-size:12px;color:#fff;letter-spacing:-0.672px;">Rola</span>
<span id="t76" class="t" style="left:546.5px;top:478.0px;line-height:16px;font-size:12px;color:#fff;letter-spacing:0.052px;">Typ identyfikatora</span>
<span id="t77" class="t" style="left:664.5px;top:478.0px;line-height:16px;font-size:12px;color:#fff;letter-spacing:0.080px;">Identyfikator wewnętrzny</span>
<span id="t78" class="t" style="left:812.5px;top:478.0px;line-height:16px;font-size:12px;color:#fff;letter-spacing:-0.336px;">Kraj</span>
<span id="t79" class="t" style="left:908.5px;top:478.0px;line-height:16px;font-size:12px;color:#fff;letter-spacing:-0.072px;">Adres</span>
<span id="t80" class="t" style="left:194.5px;top:501.0px;line-height:16px;font-size:12px;color:#000;letter-spacing:-0.094px;">Druga Filia</span>
<span id="t81" class="t" style="left:401.0px;top:501.0px;line-height:16px;font-size:12px;color:#000;letter-spacing:0.039px;">2 - Odbiorca</span>
<span id="t82" class="t" style="left:547.5px;top:501.0px;line-height:16px;font-size:12px;color:#000;letter-spacing:0.019px;">Wewnętrzny</span>
<span id="t83" class="t" style="left:665.5px;top:501.0px;line-height:16px;font-size:12px;color:#000;letter-spacing:-0.014px;">6664445511-10010</span>
<span id="t84" class="t" style="left:812.5px;top:501.0px;line-height:16px;font-size:12px;color:#000;letter-spacing:-0.844px;">PL</span>
<span id="t85" class="t" style="left:909.5px;top:501.0px;line-height:16px;font-size:12px;color:#000;letter-spacing:-0.004px;">Dolna 24/11, 11-111 Warszawa</span>
<div style="left:847px;top:600px;width:113px;height:20px;background:#2457c5;overflow:hidden;"><span class="t" style="left:41px;top:8px;line-height:16px;color:#fff;">Edytuj</span></div>
<div style="left:980px;top:600px;width:122px;height:20px;background:#fff;border:1px solid #2457c5;border-bottom:none;overflow:hidden;"><span class="t" style="left:40px;top:7px;line-height:16px;color:#2457c5;">Zamknij</span></div>
<div style="left:860px;top:630px;width:13px;height:12px;border:1px solid #a0a0a0;background:#fff;"></div>
<div style="left:864px;top:636px;width:5px;height:1px;background:#222;"></div>
<div style="left:874px;top:634px;width:170px;height:4px;background:#b9b9b9;"></div>
<div style="left:958px;top:631px;width:3px;height:9px;background:#333;"></div>
<div style="left:1045px;top:630px;width:13px;height:12px;border:1px solid #a0a0a0;background:#fff;"></div>
<div style="left:1049px;top:636px;width:5px;height:1px;background:#222;"></div>
<div style="left:1051px;top:634px;width:1px;height:5px;background:#222;"></div>
<div style="left:876px;top:643px;width:1px;height:3px;background:#222;"></div>
<span id="t86" class="t" style="left:1062.5px;top:628.0px;line-height:16px;font-size:12px;color:#000;letter-spacing:-0.426px;">100%</span>
<div style="left:652px;top:459px;width:160px;height:77px;border:3px solid #e81224;"></div>
</body></html>
